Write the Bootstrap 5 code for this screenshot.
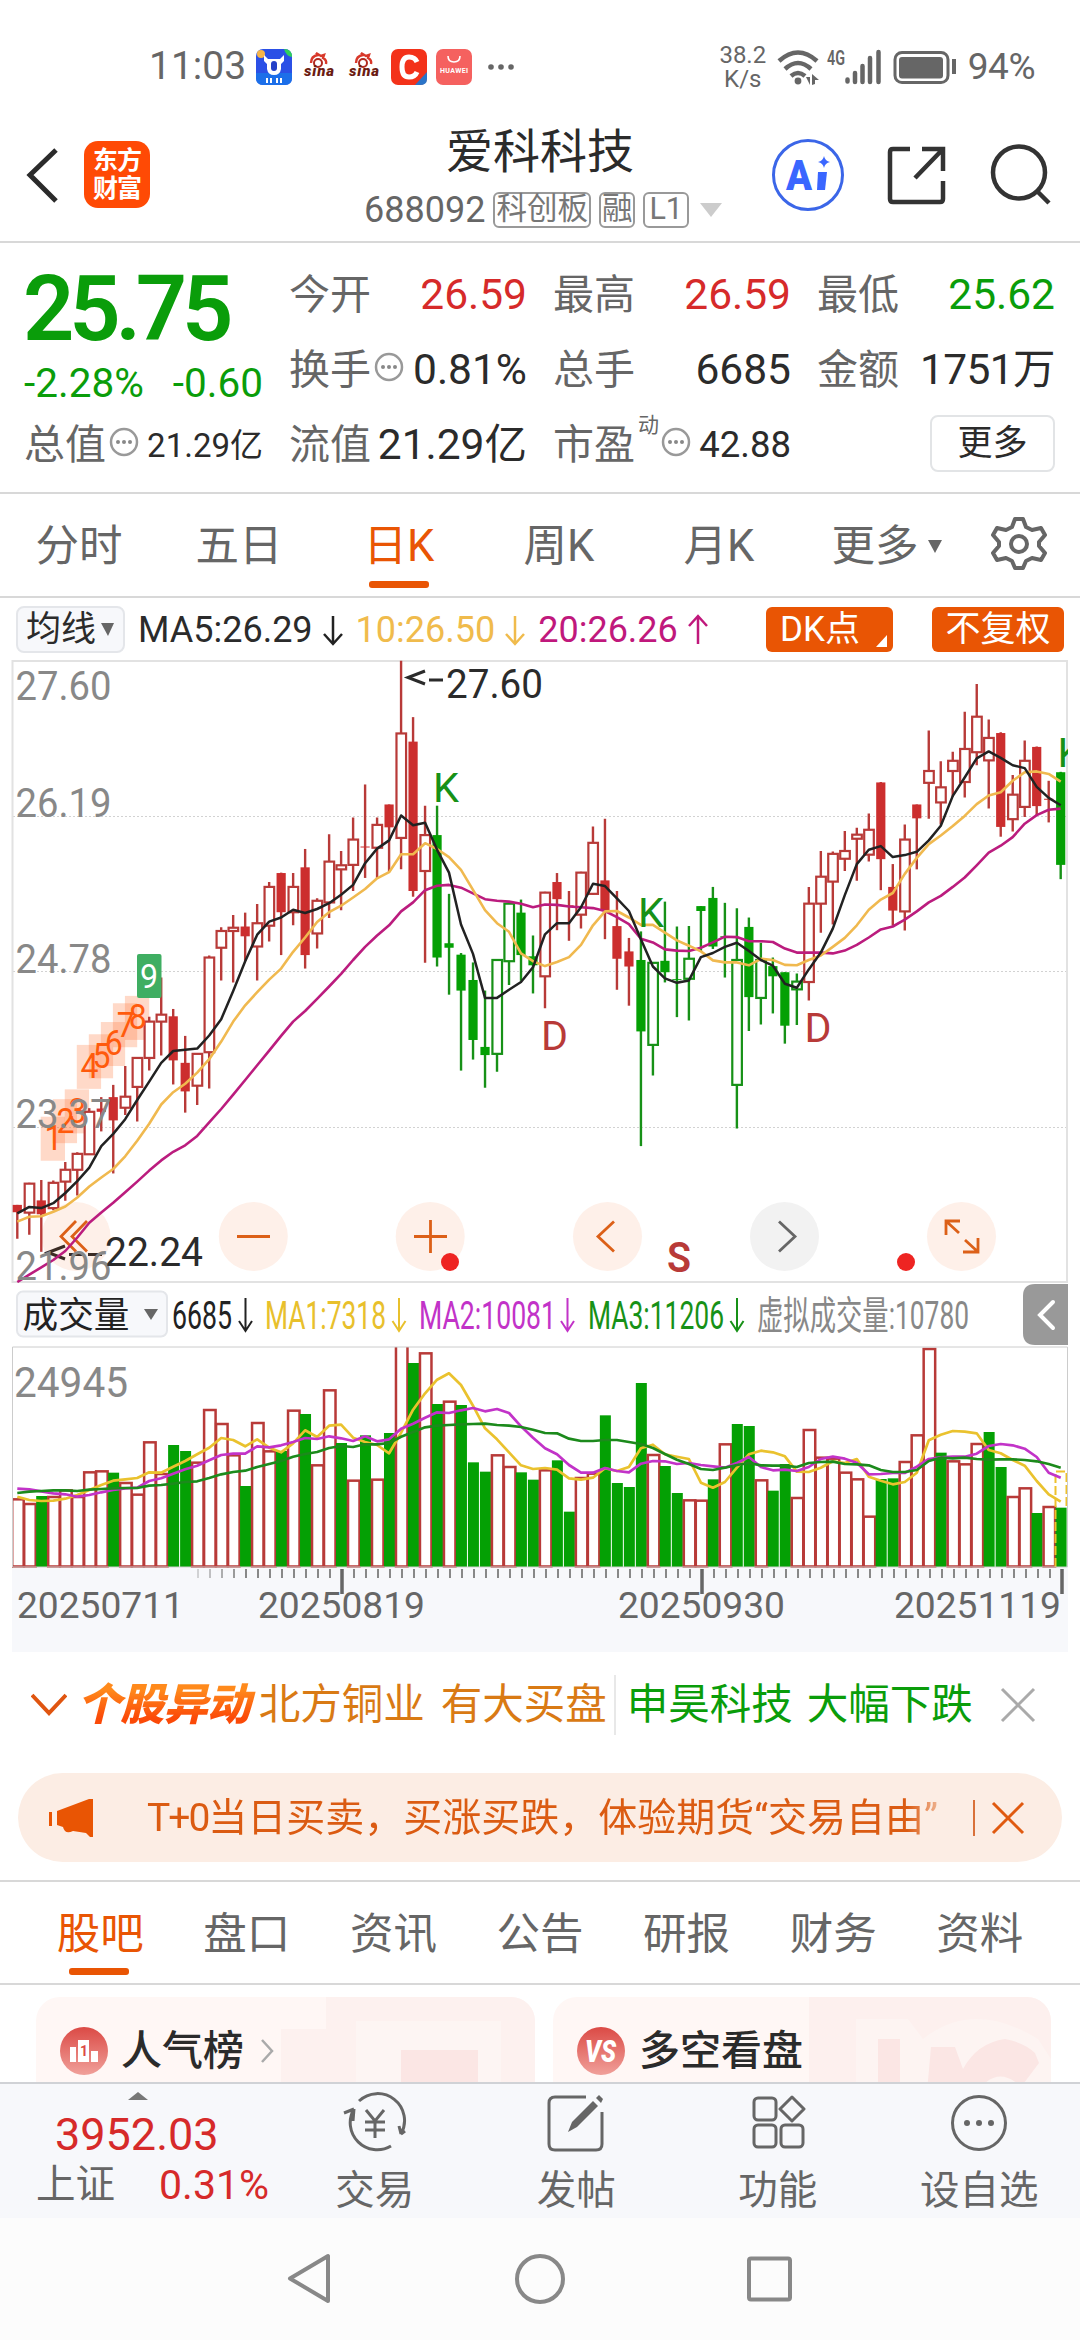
<!DOCTYPE html>
<html lang="zh-CN">
<head>
<meta charset="utf-8">
<meta name="viewport" content="width=device-width, initial-scale=1">
<title>爱科科技 688092</title>
<link href="https://cdn.jsdelivr.net/npm/bootstrap@5.3.0/dist/css/bootstrap.min.css" rel="stylesheet">
<script src="https://cdn.jsdelivr.net/npm/bootstrap@5.3.0/dist/js/bootstrap.bundle.min.js"></script>
<style>
:root{--up:#d62a2a;--dn:#0a9d0a;--or:#e95504;--g:#666;--k:#2b2b2b}
body{width:1080px;height:2340px;overflow:hidden;background:#fff;font-family:Roboto,"Noto Sans CJK SC",sans-serif;color:var(--k);line-height:1}
svg{display:block;flex:none}
svg text{font-family:Roboto,"Noto Sans CJK SC",sans-serif}
.up{color:var(--up)}.dn{color:var(--dn)}.gy{color:var(--g)}
.line-b{border-bottom:2px solid #d8d8d8}
.statusbar{height:120px;padding:13px 45px 0 149px;color:#666}
.clock{font-size:39px;width:107px}
.app-ic{margin-right:9px}
.speed{font-size:24px;line-height:24px;width:50px}
.pct{font-size:37px;letter-spacing:-.5px}
.topbar{height:123px;padding-top:8px}
.brand{width:66px;height:67px;margin-top:13px;border-radius:14px;background:#ff4a05;color:#fff;font-size:25px;line-height:28px;font-weight:700;letter-spacing:-1px}
.title{font-size:47px;line-height:52px;margin-top:-2px}
.code{font-size:36px;height:40px;color:var(--g);margin-top:12px}
.tag{border:2px solid #999;border-radius:6px;height:36px;line-height:30px;font-size:30.500px;padding:0 1px;margin-left:8px;color:#777}
.quote{height:251px;padding:15px 25px 0 26px;gap:26px}
.q-left{width:237px}
.q-col{width:238px}
.q-row{height:75px;font-size:42.500px}
.q-row .lab{font-size:41px;color:var(--g)}
.price{font-size:90px;font-weight:600;height:101px;line-height:103px;letter-spacing:-5.200px;margin-left:-3px}
.chg{font-size:40.500px;height:49px;line-height:49px;margin-left:-2px}
.more-btn{width:125px;height:57px;border:2px solid #e2e4e6;border-radius:8px;font-size:35px;padding:0;color:var(--k);background:#fff}
.periods{height:104px;font-size:43.500px;color:var(--g)}
.period{width:160px;height:100%;position:relative;padding-top:4px;padding-right:2px}
.sel{color:var(--or)}
.sel::after{content:"";position:absolute;left:50%;bottom:8px;width:60px;height:7px;margin-left:-31px;border-radius:3px;background:var(--or)}
.ma-row{height:62px;padding:1px 16px 0 16px;font-size:36px}
.pick{height:47px;border:2px solid #e4e6ea;border-radius:8px;background:#f7f8fb;font-size:35px;color:var(--k)}
.fill-btn{height:45px;background:var(--or);color:#fff;border-radius:6px;font-size:35px;position:relative}
.news{height:104px;padding:2px 44px 0 31px;font-size:41.500px}
.flash{font-size:44px;font-weight:900;font-style:italic;letter-spacing:-.8px;background:linear-gradient(#ff8a1c 20%,#fb4a08 75%);-webkit-background-clip:text;background-clip:text;color:transparent;line-height:52px;padding-right:9px}
.promo{height:89px;margin:17px 18px 18px;border-radius:45px;background:#fcede4;color:#db5b12;font-size:39px;padding:0 37px 0 30px}
.promo-text{width:808px;overflow:hidden;white-space:nowrap;line-height:60px;-webkit-mask-image:linear-gradient(90deg,#000 760px,transparent 812px);mask-image:linear-gradient(90deg,#000 760px,transparent 812px)}
.sections{height:105px;padding:0 27px;border-top:2px solid #d8d8d8;font-size:43.500px;color:var(--g)}
.section-tab{position:relative;height:100%;padding-top:5px}
.promo-cards{height:97px;padding:12px 29px 0 36px;overflow:hidden}
.feature{height:140px;width:499px;border-radius:24px;background:#fff7f5;overflow:hidden;font-size:41px;font-weight:500}
.dock{height:136px;border-top:2px solid #d0d2d6;background:#f7f8fb;color:var(--g);font-size:39.500px}
.dock-item{width:201.5px}
.dock-item span{margin-top:17px}
.sysnav{height:122px;background:#fcfcfc}
</style>
</head>
<body>
<header>
  <div class="statusbar d-flex align-items-center">
    <span class="clock">11:03</span>
    <svg class="app-ic" width="36" height="36" viewBox="0 0 36 36"><rect width="36" height="36" rx="7" fill="#2b50e6"/><circle cx="5" cy="5" r="4" fill="#f7b548"/><path d="M28 0q8 0 8 8-6-1-8-8" fill="#2fd05b"/><path d="M0 24h36v5q0 7-7 7H7q-7 0-7-7z" fill="#1c6fe9"/><path d="M8 6l4 4h12l4-4v6l-3 3v5q-1 6-7 6t-7-6v-5l-3-3z" fill="#fff"/><rect x="15" y="12" width="6" height="10" rx="3" fill="#2440c8"/><path d="M11 29v5M15 29v5M21 29v5M25 29v5" stroke="#fff" stroke-width="2"/></svg>
    <svg class="app-ic" width="36" height="36" viewBox="0 0 36 36"><path d="M10 14q0-7 7-8l-2-2 5 3 3-1-1 3q4 2 3 6" fill="none" stroke="#d8382a" stroke-width="2.4"/><circle cx="17" cy="14" r="4" fill="none" stroke="#b12a20" stroke-width="2"/><text x="3" y="27" font-size="15" font-weight="900" font-style="italic" fill="#6b1b12" textLength="30">sina</text></svg>
    <svg class="app-ic" width="36" height="36" viewBox="0 0 36 36"><path d="M10 14q0-7 7-8l-2-2 5 3 3-1-1 3q4 2 3 6" fill="none" stroke="#d8382a" stroke-width="2.4"/><circle cx="17" cy="14" r="4" fill="none" stroke="#b12a20" stroke-width="2"/><text x="3" y="27" font-size="15" font-weight="900" font-style="italic" fill="#6b1b12" textLength="30">sina</text></svg>
    <svg class="app-ic" width="36" height="36" viewBox="0 0 36 36"><rect width="36" height="36" rx="7" fill="#f3321a"/><path d="M36 23v7q0 6-7 6h-5z" fill="#2a74c8"/><path d="M26 13q-2-5-8-5-7 0-7 10t7 10q6 0 8-5" fill="none" stroke="#fff" stroke-width="5"/></svg>
    <svg width="36" height="36" viewBox="0 0 36 36"><rect width="36" height="36" rx="7" fill="#f5615f"/><path d="M12 7q0 6 6 6t6-6" fill="none" stroke="#fff" stroke-width="1.6"/><text x="4" y="24" font-size="7" font-weight="700" fill="#fff" textLength="28">HUAWEI</text></svg>
    <svg class="ms-3" width="26" height="8" viewBox="0 0 26 8"><g fill="#666"><circle cx="3" cy="4" r="2.8"/><circle cx="13" cy="4" r="2.8"/><circle cx="23" cy="4" r="2.8"/></g></svg>
    <div class="d-flex align-items-center ms-auto">
      <div class="speed text-center">38.2<br>K/s</div>
      <svg class="ms-2" width="184" height="38" viewBox="776 47 184 38"><g fill="none" stroke="#666" stroke-width="4.5"><path d="M779 60q19-17 38 0M785 68q13-12 26 0M791 75q7-6 14 0"/></g><circle cx="798" cy="80" r="3.4" fill="#666"/><path d="M806 76h4v8zM812 84v-11l7 6h-4v4z" fill="#666"/><text x="827" y="64" font-size="20" font-weight="600" fill="#666" textLength="18" lengthAdjust="spacingAndGlyphs">4G</text><path d="M847.500 78.500v2M855 72v9M862.500 65v16M870 57v24M878.500 51v30" stroke="#666" stroke-width="4.500" stroke-linecap="round"/><rect x="895" y="51.500" width="53" height="30" rx="7" fill="none" stroke="#666" stroke-width="3"/><rect x="899" y="56" width="44" height="21.500" rx="3" fill="#666"/><path d="M954 58v15" stroke="#666" stroke-width="4"/></svg>
      <span class="pct ms-2">94%</span>
    </div>
  </div>
  <div class="topbar line-b d-flex">
    <div class="d-flex align-items-start" style="width:364px">
      <svg width="84" height="94" viewBox="0 128 84 94"><path d="M56 150 30 175l26 26" fill="none" stroke="#2b2b2b" stroke-width="5"/></svg>
      <div class="brand d-flex align-items-center justify-content-center text-center">东方<br>财富</div>
    </div>
    <div class="flex-grow-1">
      <div class="title text-center" style="width:352px">爱科科技</div>
      <div class="code d-flex align-items-center">688092<span class="tag">科创板</span><span class="tag">融</span><span class="tag px-1">L1</span>
        <svg class="ms-2" width="26" height="20" viewBox="0 0 26 20"><path d="M3 3h22L14 17z" fill="#ccc"/></svg></div>
    </div>
    <svg width="310" height="100" viewBox="770 128 310 100"><circle cx="808" cy="175" r="34.500" fill="#fff" stroke="#3b66e8" stroke-width="3"/><text x="786" y="190" font-size="42" font-weight="900" fill="#3a66ff" textLength="26" lengthAdjust="spacingAndGlyphs">A</text><path d="M818 172h9l-2 18h-8z" fill="#3a66ff"/><path d="M824 156q1 5 6 6-5 1-6 6-1-5-6-6 5-1 6-6" fill="#3a66ff"/><g fill="none" stroke="#333" stroke-width="4.500"><path d="M910 149H893q-3 0-3 3v47q0 3 3 3h47q3 0 3-3v-18M922 149h21v22M943 149l-28 29"/><circle cx="1019" cy="172.500" r="26"/><path d="M1037 191l12 12"/></g></svg>
  </div>
</header>
<main>
  <section class="quote line-b d-flex">
    <div class="q-left">
      <div class="price dn">25.75</div>
      <div class="chg dn d-flex justify-content-between"><span>-2.28%</span><span>-0.60</span></div>
      <div class="q-row d-flex align-items-center"><span class="lab" style="margin-left:-2px">总值</span>
        <svg class="mb-2" style="margin-left:3px" width="30" height="30" viewBox="0 0 30 30"><use href="#dots"/></svg><span class="ms-auto text-nowrap" style="font-size:33px">21.29亿</span></div>
    </div>
    <div class="q-col">
      <div class="q-row d-flex align-items-center justify-content-between"><span class="lab">今开</span><span class="up">26.59</span></div>
      <div class="q-row d-flex align-items-center"><span class="lab">换手</span><svg class="mb-2" style="margin-left:3px" width="30" height="30" viewBox="0 0 30 30"><use href="#dots"/></svg><span class="ms-auto">0.81%</span></div>
      <div class="q-row d-flex align-items-center justify-content-between text-nowrap"><span class="lab">流值</span><span>21.29亿</span></div>
    </div>
    <div class="q-col">
      <div class="q-row d-flex align-items-center justify-content-between"><span class="lab">最高</span><span class="up">26.59</span></div>
      <div class="q-row d-flex align-items-center justify-content-between"><span class="lab">总手</span><span>6685</span></div>
      <div class="q-row d-flex align-items-center"><span class="lab">市盈</span><span class="gy align-self-start" style="font-size:21px;padding-top:7px;margin-left:3px">动</span><svg class="mb-2" style="margin-left:2px" width="30" height="30" viewBox="0 0 30 30"><g id="dots"><circle cx="15" cy="15" r="13" fill="none" stroke="#999" stroke-width="2.500"/><g fill="#888"><circle cx="9" cy="15" r="2"/><circle cx="15" cy="15" r="2"/><circle cx="21" cy="15" r="2"/></g></g></svg><span class="ms-auto" style="font-size:36.500px">42.88</span></div>
    </div>
    <div class="q-col">
      <div class="q-row d-flex align-items-center justify-content-between"><span class="lab">最低</span><span class="dn">25.62</span></div>
      <div class="q-row d-flex align-items-center justify-content-between text-nowrap"><span class="lab">金额</span><span style="letter-spacing:-.6px">1751万</span></div>
      <div class="q-row d-flex align-items-center justify-content-end"><button class="more-btn mb-1">更多</button></div>
    </div>
  </section>
  <nav class="periods line-b d-flex align-items-center">
    <div class="period d-flex align-items-center justify-content-center">分时</div>
    <div class="period d-flex align-items-center justify-content-center">五日</div>
    <div class="period sel d-flex align-items-center justify-content-center">日K</div>
    <div class="period d-flex align-items-center justify-content-center">周K</div>
    <div class="period d-flex align-items-center justify-content-center">月K</div>
    <div class="period d-flex align-items-center justify-content-center ps-3">更多<svg class="ms-2" width="16" height="16" viewBox="0 0 16 16"><path d="M1 1h14L8 14z" fill="#666"/></svg></div>
    <svg style="margin-left:26px" class="mb-1" width="66" height="60" viewBox="0 0 66 60"><g fill="none" stroke="#666" stroke-width="4" stroke-linejoin="round"><path d="M29 6h8l3 8 6 3 9-2 4 7-6 7v4l6 7-4 7-9-2-6 3-3 7h-8l-3-7-6-3-9 2-4-7 6-7v-4l-6-7 4-7 9 2 6-3z"/><circle cx="33" cy="31" r="8"/></g></svg>
  </nav>
  <div class="ma-row d-flex align-items-center">
    <div class="pick d-flex align-items-center ps-2" style="width:109px">均线<svg class="ms-1" width="16" height="16" viewBox="0 0 16 16"><path d="M1 1h13L8 14z" fill="#666"/></svg></div>
    <span style="margin-left:13px">MA5:26.29</span>
    <svg width="43" height="34" viewBox="0 0 43 34" fill="none" stroke="#222" stroke-width="2.500"><path d="M20 3v28M11 21l9 10 9-10"/></svg>
    <span style="color:#f0bb4c">10:26.50</span>
    <svg width="43" height="34" viewBox="0 0 43 34" fill="none" stroke="#f0bb4c" stroke-width="2.500"><path d="M20 3v28M11 21l9 10 9-10"/></svg>
    <span style="color:#c0187c">20:26.26</span>
    <svg width="43" height="34" viewBox="0 0 43 34" fill="none" stroke="#c0187c" stroke-width="2.500"><path d="M20 31V3M11 13l9-10 9 10"/></svg>
    <div class="fill-btn d-flex align-items-center ms-auto" style="width:127px;padding-left:14px">DK点<svg class="position-absolute" style="right:6px;bottom:5px" width="11" height="12" viewBox="0 0 11 12"><path d="M11 0v12H0z" fill="#fff"/></svg></div>
    <div class="fill-btn d-flex align-items-center justify-content-center" style="width:132px;margin-left:39px">不复权</div>
  </div>
  <svg id="kline" width="1080" height="623" viewBox="0 659 1080 623"></svg>
  <svg id="volume" width="1080" height="369" viewBox="0 1282 1080 369"></svg>

  <div class="news d-flex align-items-center text-nowrap">
    <svg width="36" height="24" viewBox="0 0 36 24"><path d="M1 2l17 18L35 2" fill="none" stroke="#e05510" stroke-width="4"/></svg>
    <span class="flash" style="margin-left:10px">个股异动</span>
    <span style="color:#d97a14">北方铜业</span><span style="color:#d97a14;margin-left:16px">有大买盘</span>
    <span style="width:2px;height:60px;background:#e8e8e8;margin:0 11px 0 7px"></span>
    <span class="dn">申昊科技</span><span class="dn" style="margin-left:14px">大幅下跌</span>
    <svg class="ms-auto" width="36" height="36" viewBox="0 0 36 36"><path d="M2 2l32 32M34 2L2 34" stroke="#aaa" stroke-width="3"/></svg>
  </div>
  <div class="promo d-flex align-items-center">
    <svg width="46" height="40" viewBox="0 0 46 40"><path d="M1 14h3v14H1zM9 13L41 1h4v38h-3l-4-4-13-2q-8 4-10-4l-6-2z" fill="#e95504"/></svg>
    <div class="promo-text" style="margin-left:53px"><span style="letter-spacing:-2px">T+0</span>当日买卖，买涨买跌，体验期货“交易自由”</div>
    <span class="ms-auto" style="width:2px;height:36px;background:#d9713a"></span>
    <svg style="margin-left:16px" width="34" height="34" viewBox="0 0 34 34"><path d="M2 2l30 30M32 2L2 32" stroke="#e05a10" stroke-width="3"/></svg>
  </div>
  <nav class="sections line-b d-flex">
    <div class="section-tab sel flex-fill d-flex align-items-center justify-content-center">股吧</div>
    <div class="section-tab flex-fill d-flex align-items-center justify-content-center">盘口</div>
    <div class="section-tab flex-fill d-flex align-items-center justify-content-center">资讯</div>
    <div class="section-tab flex-fill d-flex align-items-center justify-content-center">公告</div>
    <div class="section-tab flex-fill d-flex align-items-center justify-content-center">研报</div>
    <div class="section-tab flex-fill d-flex align-items-center justify-content-center">财务</div>
    <div class="section-tab flex-fill d-flex align-items-center justify-content-center">资料</div>
  </nav>
  <div class="promo-cards d-flex justify-content-between">
    <div class="feature position-relative">
      <svg class="position-absolute top-0 start-0" width="499" height="140" viewBox="0 0 499 140"><path d="M245 86V32h45V0h209v140H245z" fill="#fdf1ef"/><path d="M320 82V24h145v116H320z" fill="#fdf5f3"/><path d="M365 53h77v87h-77z" fill="#fbe6e4"/></svg>
      <div class="position-relative d-flex align-items-center" style="padding:30px 0 0 24px">
      <svg width="48" height="48" viewBox="0 0 48 48"><defs><linearGradient id="rg" x2="0" y2="1"><stop offset="0" stop-color="#db4a45"/><stop offset="1" stop-color="#f0a09a"/></linearGradient></defs><circle cx="24" cy="24" r="24" fill="url(#rg)"/><path d="M10 20h6v15h-6zM18 13h11v22H18zM31 24h7v11h-7z" fill="#fff"/><text x="20" y="29" font-size="14" font-weight="700" fill="#db4a45">1</text></svg>
      <span style="margin-left:13px">人气榜</span><svg class="ms-3" width="14" height="26" viewBox="0 0 14 26"><path d="M2 2l10 11L2 24" fill="none" stroke="#aaa" stroke-width="2.500"/></svg></div>
    </div>
    <div class="feature position-relative" style="width:498px">
      <svg class="position-absolute top-0 start-0" width="498" height="140" viewBox="0 0 498 140"><path d="M256 0h242v140H256z" fill="#fdf0ee"/><path d="M303 22h52l15 20q50-40 115 0l13 20v78H303z" fill="#fdf4f2"/><path d="M325 42h22v98h-22zM378 50h24l8 22q14-26 42-30 20 4 30 14l4 10-18 24q-20-20-38-2-10 16 0 52h-60z" fill="#fbe6e4"/></svg>
      <div class="position-relative d-flex align-items-center" style="padding:30px 0 0 24px">
      <svg width="48" height="48" viewBox="0 0 48 48"><circle cx="24" cy="24" r="24" fill="url(#rg)"/><text x="8" y="35" font-size="32" font-weight="900" font-style="italic" fill="#fff" textLength="31" lengthAdjust="spacingAndGlyphs">VS</text></svg>
      <span style="margin-left:14px">多空看盘</span></div>
    </div>
  </div>
</main>
<footer>
  <div class="dock d-flex">
    <div style="width:274px;padding:8px 5px 0 36px">
      <svg style="margin-left:92px" width="20" height="8" viewBox="0 0 20 8"><path d="M0 8L10 0l10 8z" fill="#777"/></svg>
      <div class="up" style="font-size:45px;line-height:58px;margin:6px 0 0 19px">3952.03</div>
      <div class="d-flex align-items-center justify-content-between" style="height:42px">上证<span class="up" style="font-size:41px">0.31%</span></div>
    </div>
    <div class="dock-item d-flex flex-column align-items-center">
      <svg class="mt-2" width="66" height="62" viewBox="342 2091 66 62" fill="none" stroke="#666" stroke-width="3"><path d="M359 2100a27 27 0 0 1 42 33l4-3M401 2133l-2-8M354 2108a27 27 0 0 0 37 37M354 2108l-10 4M354 2108l-1 12"/><path d="M366 2109l9 11 9-11M375 2120v17M365 2121h20M365 2129h20"/></svg>
      <span>交易</span></div>
    <div class="dock-item d-flex flex-column align-items-center">
      <svg class="mt-2" width="60" height="62" viewBox="0 0 60 62" fill="none" stroke="#666" stroke-width="3"><path d="M40 5H9q-6 0-6 6v41q0 6 6 6h41q6 0 6-6V20"/><path d="M22 40l4-10L47 9l5 5-21 21z" fill="#666" stroke="none"/><path d="M50 6l5 5 2-4-4-4z" fill="#666" stroke="none"/></svg>
      <span>发帖</span></div>
    <div class="dock-item d-flex flex-column align-items-center">
      <svg class="mt-2" width="56" height="62" viewBox="0 0 56 62" fill="none" stroke="#666" stroke-width="3"><rect x="4" y="6" width="22" height="22" rx="4"/><rect x="4" y="33" width="22" height="22" rx="4"/><rect x="31" y="33" width="22" height="22" rx="4"/><path d="M42 5l12 12-12 12-12-12z" stroke-linejoin="round"/></svg>
      <span>功能</span></div>
    <div class="dock-item d-flex flex-column align-items-center">
      <svg class="mt-2" width="60" height="62" viewBox="0 0 60 62"><circle cx="30" cy="31" r="26.500" fill="none" stroke="#666" stroke-width="3"/><g fill="#666"><circle cx="18" cy="31" r="3"/><circle cx="30" cy="31" r="3"/><circle cx="42" cy="31" r="3"/></g></svg>
      <span>设自选</span></div>
  </div>
  <div class="sysnav">
    <svg width="1080" height="122" viewBox="0 2218 1080 122" fill="none" stroke="#888" stroke-width="4" stroke-linejoin="round"><path d="M328 2256v45l-38-22.500z"/><circle cx="540" cy="2279" r="23"/><rect x="749" y="2258.500" width="41" height="41" rx="2"/></svg>
  </div>
</footer>
<script>
const X0=17.3, DX=11.993, UP='#b83a38', RED='#cc2e2e', GRN='#179117', GF='#04a004';
const X=i=>X0+i*DX;
// [kind, high, body top, body bottom, low]; u hollow red, R solid red, G solid green, g hollow green
const candles=`R 1357 1357 1375 1440|u 1303 1305 1376 1430|R 1296 1346 1380 1472|u 1297 1303 1365 1370|u 1252 1271 1300 1347|u 1228 1232 1271 1334|u 1120 1129 1233 1233|R 1093 1121 1129 1177|R 1063 1093 1150 1280|u 1017 1092 1119 1137|u 996 997 1068 1153|u 896 908 997 1028|u 800 891 908 991|R 877 895 1003 1062|R 943 1009 1079 1131|u 985 987 1065 1112|u 746 751 983 1072|u 677 686 727 807|u 647 678 686 812|R 641 675 699 760|u 620 667 724 807|u 566 578 673 712|R 543 544 640 745|u 544 578 640 672|R 485 530 745 778|u 606 612 692 729|u 449 516 616 654|u 490 525 535 635|u 408 462 524 588|R 327 479 481 556|u 408 426 482 556|R 376 376 432 541|u 24 202 458 535|R 162 222 588 602|u 379 451 539 764|G 379 451 751 773|G 595 716 727 842|G 740 744 832 1028|G 763 806 953 1001|G 832 970 990 1070|g 755 757 987 1031|g 616 619 760 818|G 609 641 745 808|G 697 748 770 839|u 590 592 797 875|R 544 566 608 684|R 588 623 626 710|u 541 543 646 680|u 430 470 595 597|R 411 562 635 706|R 588 674 754 830|R 703 736 773 869|G 687 757 932 1213|g 762 764 965 1040|G 614 759 787 812|G 675 804 806 897|g 674 754 803 905|G 625 625 637 735|G 578 605 724 730|G 617 699 701 800|g 630 757 1063 1170|G 653 676 848 931|g 715 757 850 915|G 751 772 797 888|G 787 787 918 962|g 790 810 829 916|u 578 619 811 856|u 490 553 619 690|u 491 497 565 670|u 441 490 509 539|u 433 450 460 563|u 398 438 499 516|R 321 322 510 586|R 522 578 636 673|u 425 462 638 685|R 376 376 410 535|u 195 294 323 411|u 270 334 371 425|u 247 269 294 358|u 149 240 321 359|u 81 161 248 280|u 168 213 268 386|R 199 201 431 455|u 304 352 412 442|u 219 269 382 407|R 234 235 380 402|R 318 362 364 420|G 296 297 524 559`.split('|').map(s=>s.split(' '));
const ma5='1378,1362,1365,1353,1328,1299,1266,1213,1183,1147,1100,1055,1009,980,977,974,942,902,833,760,695,663,653,634,642,632,618,597,573,520,484,464,403,427,421,487,543,670,742,850,850,830,811,775,694,667,667,628,570,576,606,637,706,773,802,813,807,750,740,725,715,735,757,771,815,825,780,739,680,598,522,487,478,505,500,492,464,428,355,310,263,246,262,280,287,333,360,378';
const ma10='1398,1386,1385,1374,1361,1339,1312,1290,1269,1238,1200,1158,1111,1081,1060,1033,1000,957,908,868,836,805,778,737,702,664,640,624,604,583,557,542,498,498,471,485,505,536,585,635,667,688,741,760,772,762,750,720,672,638,637,653,671,671,690,709,722,736,758,763,763,770,754,757,769,770,757,746,725,703,672,634,609,593,546,507,473,452,429,404,375,354,346,318,297,295,301,320';
const ma20='1546,1528,1510,1492,1470,1437,1401,1376,1352,1326,1300,1273,1248,1227,1211,1188,1155,1122,1087,1051,1015,979,943,908,882,852,822,791,757,725,697,672,638,616,586,575,573,580,594,608,612,614,619,628,621,622,626,628,630,637,652,669,705,714,731,734,735,727,714,700,701,711,711,713,729,739,739,739,741,734,720,702,682,675,658,638,616,600,578,555,525,494,477,456,423,402,389,386';
const vols='r652,r666,g645,r645,r625,r645,r571,r568,g575,r603,r638,r481,r576,g492,g510,r542,r384,r426,r520,g615,r423,r508,g510,r386,g399,r550,r325,g486,r596,g463,r593,g456,r180,g246,r214,g369,r359,g372,g544,g572,r520,r555,g574,g596,r565,g538,g692,r588,r575,g403,g606,g618,g306,r519,g555,g636,r655,r656,g595,r487,g429,g435,r595,g629,g549,r648,r444,r527,r530,r572,r592,r704,g594,g592,r540,r460,r201,g515,r538,r547,r486,g453,g558,r645,r619,g696,r675,g680'.split(',');
const v1='647,657,660,659,653,642,627,612,599,595,591,574,575,557,540,520,500,471,477,496,475,500,514,487,448,468,434,431,470,483,492,517,455,386,337,296,277,312,374,442,475,514,553,564,561,566,592,596,590,562,570,558,502,491,520,527,534,605,620,603,560,520,509,514,526,572,573,560,541,546,534,587,599,610,603,575,478,461,450,452,457,507,517,537,554,600,640,662';
const v2='623,625,631,637,640,647,642,634,627,622,620,600,592,578,565,554,538,522,518,518,496,499,493,483,471,474,466,472,480,466,481,475,443,428,410,394,396,388,381,391,384,396,436,470,502,520,552,575,575,561,570,574,548,540,541,549,546,552,556,560,546,528,558,568,566,570,558,534,527,533,545,580,579,576,576,557,534,529,527,527,518,495,489,493,503,528,575,590';
const v3='636,632,630,628,628,630,626,624,622,621,621,614,612,608,603,601,591,580,573,569,558,549,540,527,519,513,501,495,498,490,490,486,467,453,439,434,432,430,429,428,432,434,438,446,456,457,473,480,480,477,477,483,489,501,519,536,549,564,567,560,552,546,553,554,554,558,546,543,542,549,550,553,567,573,573,567,540,530,532,530,534,536,535,535,537,541,549,560';
const Y=v=>650+v/2.45, V=v=>1280+v/3;
const line=(s,f,c,w)=>`<polyline points="${s.split(',').map((v,i)=>X(i).toFixed(1)+','+f(+v).toFixed(1)).join(' ')}" fill="none" stroke="${c}" stroke-width="${w}" stroke-linejoin="round"/>`;
const T=(x,y,t,c,s,len,extra='')=>`<text x="${x}" y="${y}" fill="${c}" font-size="${s}" ${len?`textLength="${len}" lengthAdjust="spacingAndGlyphs"`:''} ${extra}>${t}</text>`;

let k='';
[76,253.3,430.2,607.5,784.5,961.5].forEach((x,i)=>k+=`<circle cx="${x}" cy="1235.500" r="34.500" fill="${i==4?'#f2f2f2':'#fef0e9'}"/>`);
k+='<g stroke="#d2d2d2" stroke-width="1" stroke-dasharray="2 2"><path d="M13 815.500H1066M13 970.500H1066M13 1126.500H1066"/></g><rect x="12.500" y="660" width="1054.500" height="621" fill="none" stroke="#e2e2e2" stroke-width="2"/>';
[1141,1098,1074,965,939,909,863,845].forEach((v,i)=>{k+=`<rect x="${40.7+i*12.03}" y="${Y(v)}" width="24.300" height="44" fill="#ff7838" fill-opacity=".28"/>`});
candles.forEach((c,i)=>{const [t,h,a,b,l]=[c[0],...c.slice(1).map(v=>Y(+v))],x=X(i),col=/[uR]/.test(t)?UP:GRN;
 if(/[RG]/.test(t)){k+=`<path d="M${x} ${h}V${l}" stroke="${col}" stroke-width="2.400"/><rect x="${x-4.6}" y="${a}" width="9.200" height="${Math.max(1,b-a)}" fill="${t=='R'?RED:GF}"/>`;}
 else k+=`<path d="M${x} ${h}V${a}M${x} ${b}V${l}" stroke="${col}" stroke-width="2.400"/><rect x="${x-4.6}" y="${a}" width="9.600" height="${b-a}" fill="#fff" stroke="${col}" stroke-width="2.200"/>`;});
k+='<path d="M65 1245l-17 6.500 17 6.500M69 1253.500h14M88 1253.500h14" fill="none" stroke="#3a2b24" stroke-width="3"/>';
k+='<g fill="none" stroke="#dc6018" stroke-width="2.800"><path d="M76 1220l-15 15.500 15 15M87 1220l-15 15.500 15 15M237 1235.500h33M414 1235.500h33M430.500 1219v33M614 1220.500l-16 15 16 15M946 1234v-14h14M947 1221l12 11M978 1237v14h-15M977 1250l-12-11"/></g><path d="M779 1220.500l16 15-16 15" fill="none" stroke="#666" stroke-width="2.800"/>';
k+=line(ma20,Y,'#bb1c7e',2.6)+line(ma10,Y,'#f0b94f',2.6)+line(ma5,Y,'#222',2.5);
[1141,1098,1074,965,939,909,863,845].forEach((v,i)=>k+=T(44.5+i*12.03,Y(v+82),i+1,'#ff5a0c',35,18));
k+=`<rect x="137" y="953" width="24.500" height="44" rx="2" fill="#3fae62"/>`+T(140,987,9,'#fff',34,18);
[['27.60',699],['26.19',816],['24.78',972],['23.37',1127],['21.96',1279]].forEach(a=>k+=T(15.5,a[1],a[0],'#888',40,96));
k+='<path d="M425 670l-17 6.500 17 6.500M429 679h14" fill="none" stroke="#2b2b2b" stroke-width="3"/>'+T(446,697,'27.60','#2b2b2b',40,97)+T(105,1265,'22.24','#2b2b2b',40,98);
k+=T(433,801,'K',GRN,40,26)+T(638,926,'K',GRN,40,26)+`<svg x="1050" y="700" width="18" height="80" viewBox="1050 700 18 80">${T(1057.5,766,'K',GRN,40,26)}</svg>`;
k+=T(541,1049,'D',UP,40,27)+T(804.5,1041,'D',UP,40,27)+T(667,1271,'S',UP,42,24,'font-weight="600"');
k+='<circle cx="450" cy="1261" r="9" fill="#ee2422"/><circle cx="906" cy="1261" r="9" fill="#ee2422"/>';
document.getElementById('kline').innerHTML=k;

let v='<rect x="17" y="1290.500" width="150" height="45" rx="6" fill="#f7f8fb" stroke="#e4e6ea" stroke-width="2"/>'+T(22.5,1327,'成交量','#222',36,107)+'<path d="M144 1308h14l-7 11z" fill="#666"/>';
[[172,60,'6685','#222'],[265,121,'MA1:7318','#e8c02c'],[419,137,'MA2:10081','#c233c8'],[588,136,'MA3:11206',GRN],[757,212,'虚拟成交量:10780','#888']].forEach(a=>v+=T(a[0],1328,a[2],a[3],39,a[1]));
[[245.5,'#222'],[399,'#e8c02c'],[567.5,'#c233c8'],[737,GRN]].forEach(a=>v+=`<path d="M${a[0]} 1297v33M${a[0]-6.5} 1320l6.500 10 6.500-10" fill="none" stroke="${a[1]}" stroke-width="2"/>`);
v+='<path d="M1068 1283h-33q-12 0-12 12v37q0 12 12 12h33z" fill="#999"/><path d="M1053 1301l-13 13 13 13" fill="none" stroke="#fff" stroke-width="4" stroke-linecap="round"/>';
v+='<rect x="12" y="1567" width="1056" height="84" fill="#f7f8fb"/><defs><clipPath id="vc"><rect x="12" y="1346" width="1056" height="221"/></clipPath></defs>'+T(14,1396,'24945','#888',42,114)+'<g clip-path="url(#vc)">';
vols.forEach((s,i)=>{const y=V(+s.slice(1)),x=X(i)+.4;
 v+=s[0]=='g'?`<rect x="${x-5.500}" y="${y}" width="11" height="${1566-y}" fill="${GF}"/>`:`<rect x="${x-5.500}" y="${y+1}" width="11.500" height="${1564.500-y}" fill="#fff" stroke="${UP}" stroke-width="2.500"/>`;});
v+='<path d="M1055.500 1566V1470.500h11V1505" fill="none" stroke="#eec12c" stroke-width="2" stroke-dasharray="9 3"/>'+line(v1,V,'#eac22e',2.7)+line(v2,V,'#c233c8',2.7)+line(v3,V,'#1c8a1c',2.7)+'</g><path d="M12.500 1566V1346H1067.500V1566z" fill="none" stroke="#ccc" stroke-width="1"/>';
for(let i=15;i<88;i++){const m=[27,57,87].includes(i),x=18+i*12;v+=`<path d="M${x} 1568v${m?25:9}" stroke="${m?'#666':'#888'}" stroke-width="${m?3.5:2}" opacity="${Math.min(1,(i-13)/6)}"/>`;}
[[17,'20250711'],[258,'20250819'],[618,'20250930'],[894,'20251119']].forEach(a=>v+=T(a[0],1617,a[1],'#666',37,167));
document.getElementById('volume').innerHTML=v;
</script>
</body>
</html>
